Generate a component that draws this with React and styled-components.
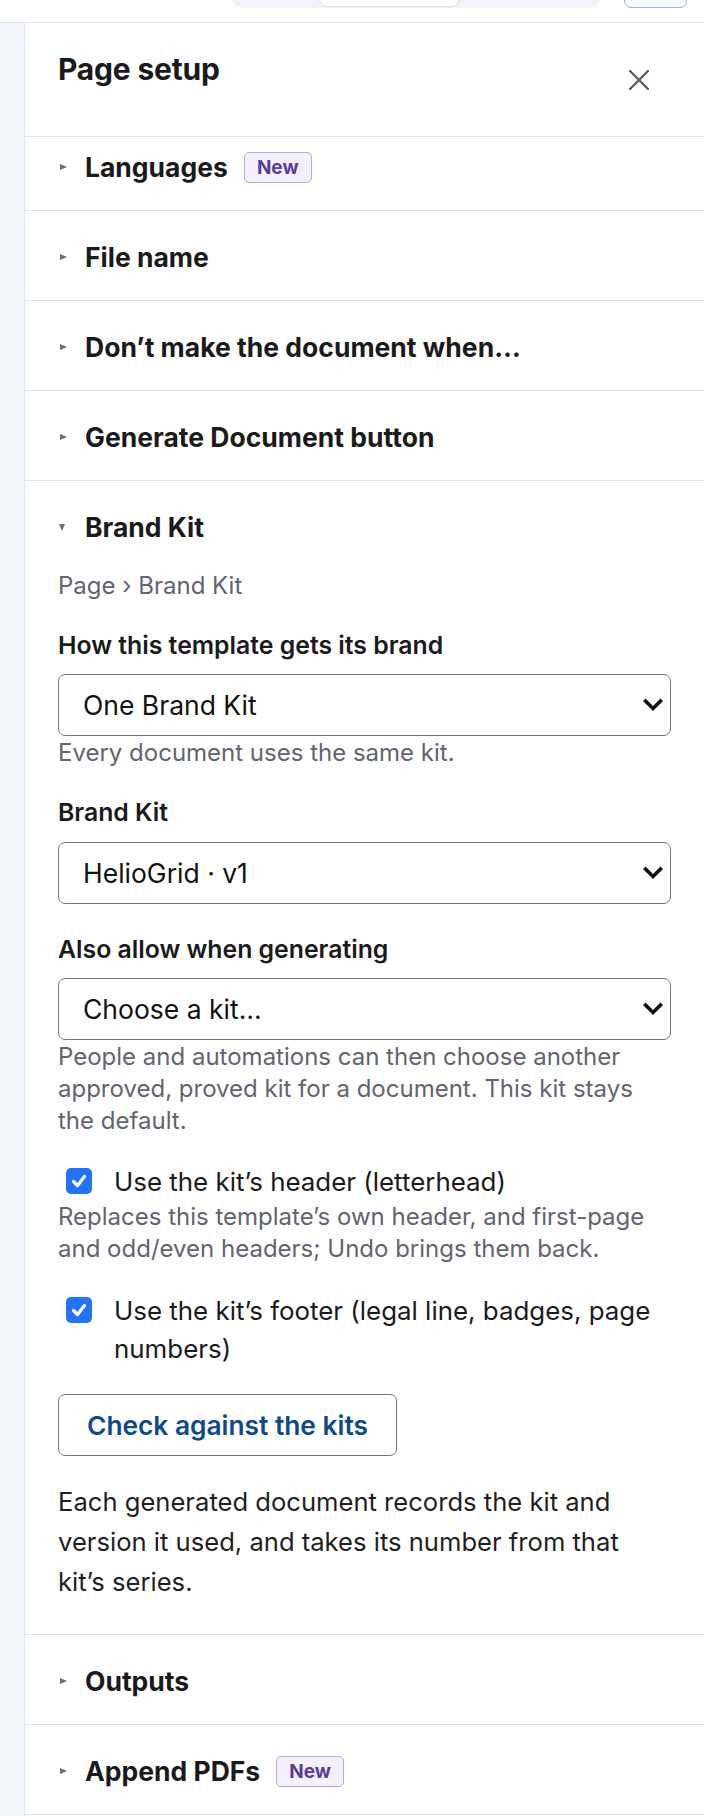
import React from 'react';
import styled, { createGlobalStyle } from 'styled-components';

const Global = createGlobalStyle`
  html, body { margin: 0; padding: 0; background: #ffffff; }
  body {
    font-family: Inter, "Noto Sans", "Liberation Sans", sans-serif;
    color: #1b1b1f;
    -webkit-font-smoothing: antialiased;
  }
  * { box-sizing: border-box; }
`;

const Page = styled.div`
  width: 704px;
  height: 1816px;
  display: flex;
  flex-direction: column;
  overflow: hidden;
  background: #fff;
`;

const TopBar = styled.div`
  flex-shrink: 0;
  height: 23px;
  border-bottom: 1px solid #e4e2f0;
  overflow: hidden;
`;

const TopInner = styled.div`
  display: flex;
  align-items: flex-end;
  gap: 24px;
  height: 40px;
  margin-top: -32px;
  padding-left: 232px;
`;

const Segmented = styled.div`
  width: 368px;
  height: 40px;
  background: #f1f4f9;
  border-radius: 10px;
  display: flex;
  align-items: flex-end;
  padding: 0 0 1px 87px;
`;

const SegActive = styled.div`
  width: 141px;
  height: 36px;
  background: #fff;
  border: 1px solid #dcdce6;
  border-radius: 8px;
`;

const TopButton = styled.div`
  width: 63px;
  height: 40px;
  border: 1.5px solid #93b3e8;
  background: #f6f9fe;
  border-radius: 7px;
`;

const Main = styled.div`
  flex: 1;
  display: flex;
  min-height: 0;
`;

const Rail = styled.div`
  width: 25px;
  flex-shrink: 0;
  background: #f1f5fa;
  border-right: 1px solid #e3e3ef;
`;

const Panel = styled.div`
  flex: 1;
  display: flex;
  flex-direction: column;
  min-width: 0;
`;

const Header = styled.div`
  height: 114px;
  border-bottom: 1px solid #e1e0ee;
  display: flex;
  justify-content: space-between;
  align-items: flex-start;
  padding: 28px 33px 0 33px;
`;

const Title = styled.h2`
  margin: 0;
  font-size: 30px;
  line-height: 36px;
  font-weight: 700;
  color: #1a1a1d;
  letter-spacing: -0.2px;
`;

const CloseButton = styled.button`
  width: 44px;
  height: 44px;
  margin: 7px 10px 0 0;
  border: none;
  background: transparent;
  padding: 0;
  display: flex;
  align-items: center;
  justify-content: center;
  color: #5a5e6a;
  cursor: pointer;
`;

const Section = styled.section`
  border-bottom: 1px solid #e1e0ee;
`;

const Summary = styled.div`
  display: flex;
  align-items: center;
  padding: ${p => (p.$first ? '14px' : '30px')} 33px 27px 35px;
  height: ${p => (p.$first ? '73px' : '89px')};
`;

const Marker = styled.span`
  width: 0;
  height: 0;
  flex-shrink: 0;
  margin-right: ${p => (p.$open ? '20px' : '18px')};
  margin-left: ${p => (p.$open ? '-1px' : '0')};
  ${p =>
    p.$open
      ? `border-left: 3.5px solid transparent; border-right: 3.5px solid transparent; border-top: 7px solid #6b6b70;`
      : `border-top: 3.5px solid transparent; border-bottom: 3.5px solid transparent; border-left: 7px solid #6b6b70;`}
`;

const SectionTitle = styled.h3`
  margin: 0;
  font-size: 26.5px;
  line-height: 32px;
  font-weight: 700;
  color: #1a1a1d;
`;

const Badge = styled.span`
  margin-left: 16px;
  height: 31px;
  padding: 0 12px;
  display: inline-flex;
  align-items: center;
  border: 1.5px solid #bda5e6;
  background: #f5f0fd;
  border-radius: 5px;
  color: #5b3a9f;
  font-size: 19px;
  font-weight: 700;
`;

const Body = styled.div`
  padding: 0 33px 32px 33px;
  display: flex;
  flex-direction: column;
  align-items: flex-start;
`;

const Crumb = styled.div`
  font-size: 24px;
  line-height: 32px;
  color: #62646f;
`;

const Label = styled.label`
  display: block;
  margin-top: ${p => p.$mt}px;
  font-size: 24.8px;
  line-height: 32px;
  font-weight: 600;
  color: #1a1a1d;
`;

const SelectWrap = styled.div`
  position: relative;
  width: 100%;
  margin-top: ${p => p.$mt}px;
`;

const Select = styled.select`
  appearance: none;
  -webkit-appearance: none;
  width: 100%;
  height: 62px;
  border: 1.5px solid #737373;
  border-radius: 7px;
  background: #fff;
  padding: 0 50px 0 24px;
  font-family: inherit;
  font-size: 26.5px;
  color: #111;
  outline: none;
`;

const Chevron = styled.svg`
  position: absolute;
  right: 8px;
  top: 50%;
  transform: translateY(-50%);
  pointer-events: none;
`;

const Hint = styled.p`
  margin: ${p => p.$mt || 0}px 0 0 0;
  font-size: 24px;
  line-height: 32px;
  color: #62646f;
`;

const CheckRow = styled.label`
  display: flex;
  align-items: flex-start;
  margin-top: ${p => p.$mt}px;
  font-size: 25.9px;
  line-height: 38px;
  color: #1a1a1d;
  cursor: pointer;
`;

const Box = styled.span`
  flex-shrink: 0;
  width: 26px;
  height: 26px;
  margin: 5px 22px 0 8px;
  border-radius: 5px;
  background: #2374f4;
  display: flex;
  align-items: center;
  justify-content: center;
`;

const Button = styled.button`
  margin-top: 26px;
  height: 62px;
  padding: 0 28px;
  border: 1.5px solid #737373;
  border-radius: 7px;
  background: #fff;
  font-family: inherit;
  font-size: 26.3px;
  font-weight: 600;
  color: #0b4a8b;
  cursor: pointer;
`;

const Para = styled.p`
  margin: 26px 0 0 0;
  font-size: 25.6px;
  line-height: 40px;
  color: #1f1f23;
`;

const ChevronIcon = () => (
  <Chevron width="20" height="14" viewBox="0 0 20 14">
    <path d="M2.5 3 L10 10.5 L17.5 3" fill="none" stroke="#111" strokeWidth="3.6" strokeLinecap="square" />
  </Chevron>
);

const Field = ({ label, value, mtLabel, mtSelect }) => (
  <>
    <Label $mt={mtLabel}>{label}</Label>
    <SelectWrap $mt={mtSelect}>
      <Select defaultValue={value}>
        <option>{value}</option>
      </Select>
      <ChevronIcon />
    </SelectWrap>
  </>
);

const Check = ({ children, mt }) => (
  <CheckRow $mt={mt}>
    <Box>
      <svg width="18" height="18" viewBox="0 0 18 18">
        <path d="M3.5 9.5 L7.5 13.5 L14.5 4.5" fill="none" stroke="#fff" strokeWidth="3.2" strokeLinecap="round" strokeLinejoin="round" />
      </svg>
    </Box>
    <span>{children}</span>
  </CheckRow>
);

const Row = ({ title, badge, first }) => (
  <Section>
    <Summary $first={first}>
      <Marker />
      <SectionTitle>{title}</SectionTitle>
      {badge && <Badge>New</Badge>}
    </Summary>
  </Section>
);

export default function App() {
  return (
    <Page>
      <Global />
      <TopBar>
        <TopInner>
          <Segmented>
            <SegActive />
          </Segmented>
          <TopButton />
        </TopInner>
      </TopBar>
      <Main>
        <Rail />
        <Panel>
          <Header>
            <Title>Page setup</Title>
            <CloseButton aria-label="Close">
              <svg width="20" height="20" viewBox="0 0 20 20">
                <path d="M1 1 L19 19 M19 1 L1 19" stroke="currentColor" strokeWidth="2.4" strokeLinecap="round" />
              </svg>
            </CloseButton>
          </Header>
          <Row title="Languages" badge first />
          <Row title="File name" />
          <Row title="Don’t make the document when…" />
          <Row title="Generate Document button" />
          <Section>
            <Summary>
              <Marker $open />
              <SectionTitle>Brand Kit</SectionTitle>
            </Summary>
            <Body>
              <Crumb>Page › Brand Kit</Crumb>
              <Field label="How this template gets its brand" value="One Brand Kit" mtLabel={27} mtSelect={13} />
              <Hint $mt={1}>Every document uses the same kit.</Hint>
              <Field label="Brand Kit" value="HelioGrid · v1" mtLabel={27} mtSelect={14} />
              <Field label="Also allow when generating" value="Choose a kit…" mtLabel={29} mtSelect={13} />
              <Hint $mt={1}>
                People and automations can then choose another approved, proved kit for a document. This kit stays the default.
              </Hint>
              <Check mt={26}>Use the kit’s header (letterhead)</Check>
              <Hint>Replaces this template’s own header, and first-page and odd/even headers; Undo brings them back.</Hint>
              <Check mt={27}>Use the kit’s footer (legal line, badges, page numbers)</Check>
              <Button>Check against the kits</Button>
              <Para>
                Each generated document records the kit and version it used, and takes its number from that kit’s series.
              </Para>
            </Body>
          </Section>
          <Row title="Outputs" />
          <Row title="Append PDFs" badge />
        </Panel>
      </Main>
    </Page>
  );
}
